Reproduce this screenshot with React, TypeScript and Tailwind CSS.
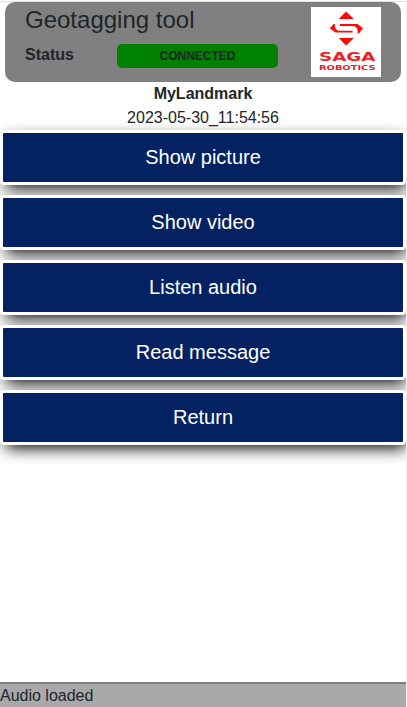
const actions = ["Show picture", "Show video", "Listen audio", "Read message", "Return"];

function Logo() {
  return (
    <svg width="70" height="70" viewBox="0 0 70 70" className="mt-[5px] mr-5 shrink-0 bg-white">
      <g fill="#ff0808">
        <path d="M35 4.5 42.8 12H27.7Z" />
        <path d="M27.7 31h15.1L35 38.5Z" />
        <path d="M29 17h17.5l5.5 4.3-4.2 5.2h-1.3c1-3.9-.9-7.6-4.6-7.6H29Z" />
        <path d="M41.5 25.4H24.5l-5.8-4.2 4-4.2h1.3c-.8 3.6 1.4 6.8 4.6 6.8h12.9Z" />
      </g>
      <g fill="#ec1f27" fontWeight="700" className="font-['DejaVu_Sans',Verdana,sans-serif]">
        <text x="8" y="54.2" fontSize="12.8" textLength="56.5" lengthAdjust="spacingAndGlyphs">SAGA</text>
        <text x="8" y="63" fontSize="6.8" textLength="56.5" lengthAdjust="spacingAndGlyphs">ROBOTICS</text>
      </g>
    </svg>
  );
}

export default function App() {
  return (
    <div className="flex h-[707px] w-[407px] flex-col overflow-hidden border-r border-[#f0f0f0] bg-white font-['Liberation_Sans',Arial,sans-serif] text-base leading-6 text-[#212529]">
      <div className="h-0.5 shrink-0 border-b border-[#dee2e6]" />
      <header className="mx-[5px] flex h-20 shrink-0 justify-between rounded-[10px] bg-[#808080] pl-5">
        <div className="flex flex-col">
          <h1 className="mt-[3px] text-2xl leading-[30px]">Geotagging tool</h1>
          <div className="mt-[9px] flex h-6 items-center">
            <span className="w-[92px] pb-0.5 font-bold">Status</span>
            <span className="h-6 w-[161px] rounded-[5px] bg-[#008000] text-center text-xs leading-6 font-bold">CONNECTED</span>
          </div>
        </div>
        <Logo />
      </header>
      <div className="h-12 shrink-0 text-center">
        <p className="font-bold">MyLandmark</p>
        <p>2023-05-30_11:54:56</p>
      </div>
      <main className="flex flex-1 flex-col gap-2.5">
        {actions.map((label) => (
          <button key={label} className="h-[55px] w-full rounded-[4px] border-[3px] border-white bg-[#042262] pb-0.5 text-center text-xl text-white shadow-[3px_6px_16px_-3px_#000]">
            {label}
          </button>
        ))}
      </main>
      <footer className="h-[25px] shrink-0 border-t-2 border-[#808080] bg-[#a9a9a9] leading-6">Audio loaded</footer>
    </div>
  );
}
